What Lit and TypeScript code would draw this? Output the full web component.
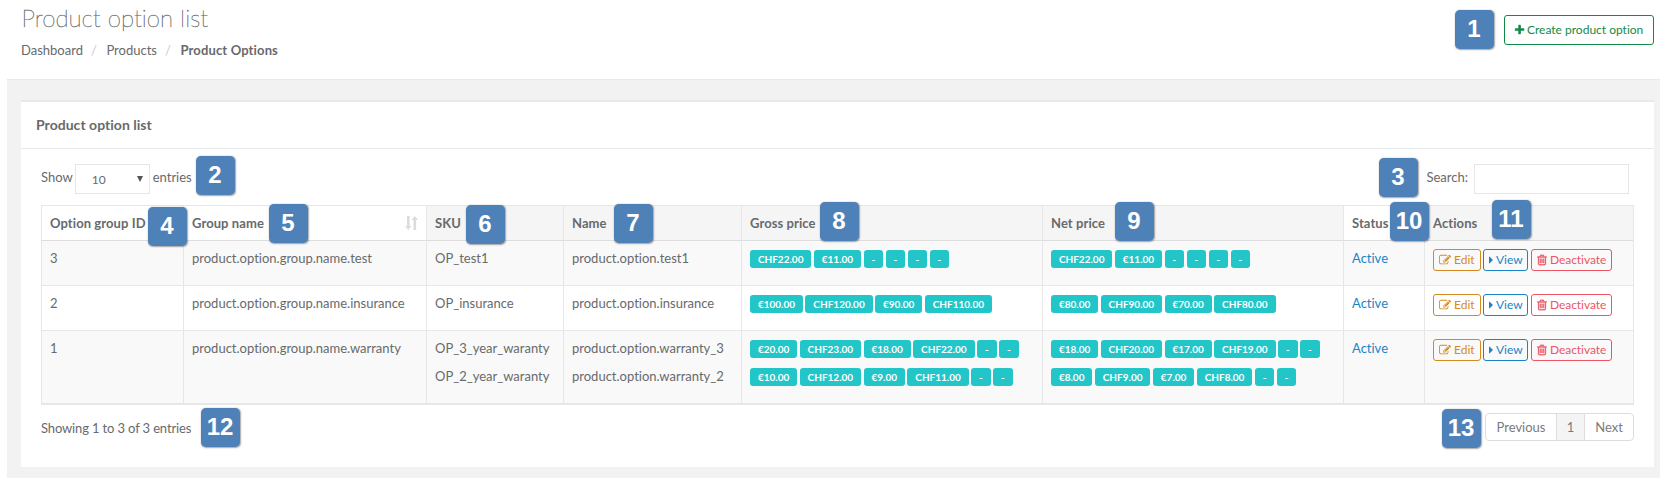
import { LitElement, html, css, svg } from "lit";
import { customElement } from "lit/decorators.js";
import { styleMap } from "lit/directives/style-map.js";

const PLUS = "M1600 736v192q0 40-28 68t-68 28h-416v416q0 40-28 68t-68 28h-192q-40 0-68-28t-28-68v-416h-416q-40 0-68-28t-28-68v-192q0-40 28-68t68-28h416v-416q0-40 28-68t68-28h192q40 0 68 28t28 68v416h416q40 0 68 28t28 68z";
const PENCIL = "M888 1184l116-116-152-152-116 116v56h96v96h56zm440-720q-16-16-33 1l-350 350q-17 17-1 33t33-1l350-350q17-17 1-33zm80 594v190q0 119-84.5 203.5t-203.5 84.5h-832q-119 0-203.5-84.5t-84.5-203.5v-832q0-119 84.5-203.5t203.5-84.5h832q63 0 117 25 15 7 18 23 3 17-9 29l-49 49q-14 14-32 8-23-6-45-6h-832q-66 0-113 47t-47 113v832q0 66 47 113t113 47h832q66 0 113-47t47-113v-126q0-13 9-22l64-64q15-15 35-7t20 29zm-96-738l288 288-672 672h-288v-288zm444 132l-92 92-288-288 92-92q28-28 68-28t68 28l152 152q28 28 28 68t-28 68z";
const TRASH = "M704 736v576q0 14-9 23t-23 9h-64q-14 0-23-9t-9-23v-576q0-14 9-23t23-9h64q14 0 23 9t9 23zm256 0v576q0 14-9 23t-23 9h-64q-14 0-23-9t-9-23v-576q0-14 9-23t23-9h64q14 0 23 9t9 23zm256 0v576q0 14-9 23t-23 9h-64q-14 0-23-9t-9-23v-576q0-14 9-23t23-9h64q14 0 23 9t9 23zm128 724v-948h-896v948q0 22 7 40.5t14.5 27 10.5 8.5h832q3 0 10.5-8.5t14.5-27 7-40.5zm-672-1076h448l-48-117q-7-9-17-11h-317q-10 2-17 11zm928 32v64q0 14-9 23t-23 9h-96v948q0 83-47 143.5t-113 60.5h-832q-66 0-113-58.5t-47-141.5v-952h-96q-14 0-23-9t-9-23v-64q0-14 9-23t23-9h309l70-167q15-37 54-63t79-26h320q40 0 79 26t54 63l70 167h309q14 0 23 9t9 23z";
const CARET = "M1152 896q0 26-19 45l-448 448q-19 19-45 19t-45-19-19-45v-896q0-26 19-45t45-19 45 19l448 448q19 19 19 45z";

interface Row {
  id: string;
  group: string;
  skus: string[];
  names: string[];
  gross: string[][];
  net: string[][];
}

const ROWS: Row[] = [
  {
    id: "3",
    group: "product.option.group.name.test",
    skus: ["OP_test1"],
    names: ["product.option.test1"],
    gross: [["CHF22.00", "€11.00", "-", "-", "-", "-"]],
    net: [["CHF22.00", "€11.00", "-", "-", "-", "-"]],
  },
  {
    id: "2",
    group: "product.option.group.name.insurance",
    skus: ["OP_insurance"],
    names: ["product.option.insurance"],
    gross: [["€100.00", "CHF120.00", "€90.00", "CHF110.00"]],
    net: [["€80.00", "CHF90.00", "€70.00", "CHF80.00"]],
  },
  {
    id: "1",
    group: "product.option.group.name.warranty",
    skus: ["OP_3_year_waranty", "OP_2_year_waranty"],
    names: ["product.option.warranty_3", "product.option.warranty_2"],
    gross: [
      ["€20.00", "CHF23.00", "€18.00", "CHF22.00", "-", "-"],
      ["€10.00", "CHF12.00", "€9.00", "CHF11.00", "-", "-"],
    ],
    net: [
      ["€18.00", "CHF20.00", "€17.00", "CHF19.00", "-", "-"],
      ["€8.00", "CHF9.00", "€7.00", "CHF8.00", "-", "-"],
    ],
  },
];

// Numbered callouts laid over the page: [left, top]
const CALLOUTS: [number, number][] = [
  [1454.5, 9.5], [195.5, 155.5], [1378.5, 157.5], [147.5, 206.5], [268.5, 203.5],
  [465.5, 204.5], [613.5, 203.5], [819.5, 201.5], [1114.5, 201.5], [1389.5, 201.5],
  [1491.5, 199.5], [200.5, 407.5], [1441.5, 408.5],
];

@customElement("app-root")
export class AppRoot extends LitElement {
  static styles = css`
    :host {
      display: block;
      position: relative;
      height: 478px;
      overflow: hidden;
      background: #fff;
      color: #676a6c;
      font: 13px/18px Lato, sans-serif;
      font-variant-ligatures: none;
    }
    * { box-sizing: border-box; }
    .icon { fill: currentColor; display: block; flex: none; }
    .off .icon { stroke: currentColor; stroke-width: 50px; }
    .heading {
      height: 80px;
      margin-left: 7px;
      border-bottom: 1px solid #e7eaec;
      padding: 5px 6px 0 14px;
      display: flex;
      justify-content: space-between;
    }
    h1 { margin: 0; font-size: 24px; line-height: 27px; font-weight: 100; padding-left: 0.5px; letter-spacing: 0.05px; -webkit-text-stroke: 0.4px #676a6c; position: relative; top: -1px; }
    .crumbs { display: flex; margin-top: 9px; }
    .crumbs .sep { color: #ccc; padding: 0 9px 0 8px; width: 23.5px; }
    .crumbs b { font-weight: 700; letter-spacing: 0.14px; }
    .create {
      display: flex;
      align-items: center;
      width: 150px;
      height: 30px;
      margin-top: 10px;
      padding: 0 0 1px 9px;
      gap: 1px;
      font-size: 12px;
      border: 1px solid #128a47;
      border-radius: 3px;
      color: #128a47;
      white-space: nowrap;
    }
    .content {
      margin-left: 7px;
      height: 398px;
      padding: 20px 6px 0 14px;
      background: #f2f2f2;
    }
    .panel { height: 367px; background: #fff; border-top: 2px solid #e7eaec; }
    h5 {
      margin: 0;
      height: 47px;
      padding: 14px 15px 0;
      font-size: 14px;
      line-height: 18px;
      font-weight: 700;
      letter-spacing: 0.03px;
      border-bottom: 1px solid #e7eaec;
    }
    .body { padding: 15px 20px 0; }
    .tools { display: flex; justify-content: space-between; height: 30px; padding-right: 5px; margin-bottom: 11px; }
    .tool { display: flex; line-height: 26px; }
    .select {
      width: 75px;
      height: 30px;
      margin: 0 3px 0 2px;
      padding: 2px 6px 0 16px;
      border: 1px solid #e5e6e7;
      font-size: 12px;
      display: flex;
      justify-content: space-between;
    }
    .arrow { margin-top: 9px; width: 6px; height: 6px; fill: #555; }
    .search { width: 155px; height: 30px; margin-left: 6px; border: 1px solid #e5e6e7; }
    table {
      width: 1593px;
      table-layout: fixed;
      border-collapse: separate;
      border-spacing: 0;
      border: solid #e7e7e7;
      border-width: 1px 1px 1px 0;
    }
    th, td {
      border: solid #e7e7e7;
      border-width: 0 0 1px 1px;
      padding: 8px;
      text-align: left;
      vertical-align: top;
      white-space: nowrap;
    }
    th { height: 35px; background: #f5f5f6; border-bottom-color: #ddd; font-weight: 700; letter-spacing: 0.08px; }
    th.plain { background: #fff; }
    .th { display: flex; justify-content: space-between; align-items: center; }
    td { height: 45px; line-height: 18px; }
    tr.odd td { background: #f9f9f9; }
    .line { height: 28px; }
    tr:not(.tall) .line { height: 18px; }
    tr.tall td { height: 73px; }
    .labels { display: flex; gap: 2.5px; padding-top: 1px; }
    .label {
      background: #23c6c8;
      color: #fff;
      font-size: 10px;
      line-height: 18px;
      height: 18px;
      padding: 0 7.9px;
      border-radius: 3px;
      font-weight: 700;
    }
    .label.none { width: 19.5px; padding: 0; text-align: center; }
    .active { color: #1c84c6; }
    .actions { display: flex; }
    .btn {
      display: flex;
      align-items: center;
      height: 22px;
      border: 1px solid;
      border-radius: 3px;
      font-size: 12px;
      padding-left: 5px;
    }
    .edit { width: 48px; margin-right: 2px; color: #d58a1f; gap: 3px; }
    .view { width: 45px; margin-right: 3px; color: #1c84c6; gap: 3px; }
    .off { width: 81px; color: #ed5565; gap: 3px; }
    .off span { letter-spacing: -0.06px; }
    .foot { display: flex; justify-content: space-between; margin-top: 8px; }
    .info { padding-top: 6px; letter-spacing: -0.14px; }
    .pager { display: flex; width: 149px; height: 28px; border: 1px solid #ddd; border-radius: 4px; text-align: center; line-height: 27px; color: #7b7b7b; overflow: hidden; }
    .pager .prev { width: 70px; }
    .pager .cur { width: 29px; background: #f4f4f4; border: solid #ddd; border-width: 0 1px; }
    .pager .next { flex: 1; }
    .callout {
      position: absolute;
      width: 39px;
      height: 39px;
      border-radius: 5px;
      background: #4f81b9;
      box-shadow: 0.5px 0.5px 1.5px rgba(0, 0, 0, 0.35);
      color: #fff;
      font: bold 24px/37px "Liberation Sans", Arial, sans-serif;
      text-align: center;
    }
  `;

  private icon(d: string, w: number, h: number, box: string) {
    return svg`<svg class="icon" width=${w} height=${h} viewBox=${box}><path d=${d}></path></svg>`;
  }

  private lines(items: string[]) {
    return items.map((t) => html`<div class="line">${t}</div>`);
  }

  private prices(lines: string[][]) {
    return lines.map(
      (l) =>
        html`<div class="line labels">${l.map((p) => html`<span class="label ${p === "-" ? "none" : ""}">${p}</span>`)}</div>`
    );
  }

  render() {
    const widths = [142, 243, 137, 178, 301, 301, 81, 209];
    return html`
      <header class="heading">
        <div>
          <h1>Product option list</h1>
          <div class="crumbs">
            <span>Dashboard</span><span class="sep">/</span><span>Products</span><span class="sep">/</span><b>Product Options</b>
          </div>
        </div>
        <div class="create">${this.icon(PLUS, 12, 12, "64 0 1792 1792")}<span>Create product option</span></div>
      </header>
      <main class="content">
        <section class="panel">
          <h5>Product option list</h5>
          <div class="body">
            <div class="tools">
              <div class="tool">
                <span>Show</span>
                <div class="select"><span>10</span><svg class="arrow" viewBox="0 0 6 6"><path d="M0 0h6L3 6z"></path></svg></div>
                <span>entries</span>
              </div>
              <div class="tool"><span>Search:</span><div class="search"></div></div>
            </div>
            <table>
              <colgroup>${widths.map((w) => html`<col style=${styleMap({ width: w + "px" })} />`)}</colgroup>
              <thead>
                <tr>
                  <th class="plain">Option group ID</th>
                  <th class="plain">
                    <div class="th">
                      <span>Group name</span>
                      <svg width="13" height="14" viewBox="0 0 13 14" fill="#dcdcdc"><path d="M2 0h2.6v10h2L3.3 14 0 10h2zM8.5 14h2.6V4h2L9.8 0 6.5 4h2z"></path></svg>
                    </div>
                  </th>
                  <th>SKU</th>
                  <th>Name</th>
                  <th>Gross price</th>
                  <th>Net price</th>
                  <th class="plain">Status</th>
                  <th>Actions</th>
                </tr>
              </thead>
              <tbody>
                ${ROWS.map(
                  (r, i) => html`<tr class="${i % 2 ? "" : "odd"} ${r.skus.length > 1 ? "tall" : ""}">
                    <td>${r.id}</td>
                    <td>${r.group}</td>
                    <td>${this.lines(r.skus)}</td>
                    <td>${this.lines(r.names)}</td>
                    <td>${this.prices(r.gross)}</td>
                    <td>${this.prices(r.net)}</td>
                    <td><span class="active">Active</span></td>
                    <td>
                      <div class="actions">
                        <div class="btn edit">${this.icon(PENCIL, 12, 12, "0 0 1792 1792")}<span>Edit</span></div>
                        <div class="btn view">${this.icon(CARET, 4, 12, "576 0 597 1792")}<span>View</span></div>
                        <div class="btn off">${this.icon(TRASH, 10, 12, "150 0 1493 1792")}<span>Deactivate</span></div>
                      </div>
                    </td>
                  </tr>`
                )}
              </tbody>
            </table>
            <div class="foot">
              <div class="info">Showing 1 to 3 of 3 entries</div>
              <div class="pager"><span class="prev">Previous</span><span class="cur">1</span><span class="next">Next</span></div>
            </div>
          </div>
        </section>
      </main>
      ${CALLOUTS.map(
        ([x, y], i) => html`<div class="callout" style=${styleMap({ left: x + "px", top: y + "px" })}>${i + 1}</div>`
      )}
    `;
  }
}
